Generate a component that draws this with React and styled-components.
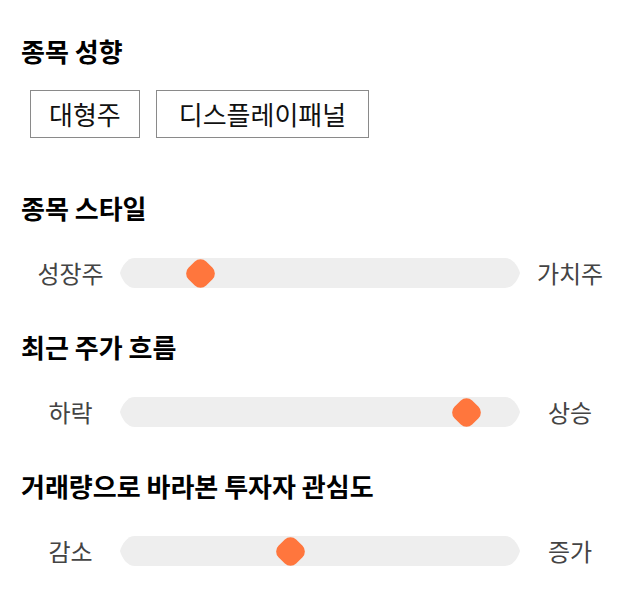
import React from 'react'
import styled, { createGlobalStyle } from 'styled-components'

const GlobalStyle = createGlobalStyle`
    body {
        margin: 0;
        background: #fff;
        font-family: "Noto Sans CJK KR", "Noto Sans", sans-serif;
    }
`;

const Page = styled.div`
    display: flex;
    flex-direction: column;
    gap: 44px;
    width: 600px;
    padding: 36px 20px 0 21px;
`;

const Section = styled.section`
    display: flex;
    flex-direction: column;
    gap: ${props => props.tight ? '24px' : '35px'};
    margin-bottom: ${props => props.tight ? '11px' : '0'};
`;

const Heading = styled.h2`
    margin: 0;
    font-size: 26px;
    line-height: 30px;
    font-weight: 700;
    color: #000;
    white-space: nowrap;
`;

const ChipGroup = styled.div`
    display: flex;
    gap: 16px;
    padding-left: 9px;
`;

const Chip = styled.button`
    box-sizing: border-box;
    height: 48px;
    padding: 0 ${props => props.pad}px;
    border: 1px solid #8a8a8a;
    background: #fff;
    font-family: inherit;
    font-size: 26px;
    line-height: 30px;
    color: #111;
    cursor: pointer;
`;

const SliderRow = styled.div`
    display: grid;
    grid-template-columns: 99px 400px 100px;
    align-items: center;
    height: 30px;
`;

const Label = styled.span`
    text-align: center;
    font-size: 24px;
    line-height: 30px;
    color: #444;
    white-space: nowrap;
`;

const Track = styled.div`
    position: relative;
    height: 30px;
`;

const TrackShape = styled.svg`
    display: block;
`;

const Thumb = styled.div`
    position: absolute;
    top: 2.5px;
    width: 25px;
    height: 25px;
    margin-left: 1.5px;
    border-radius: 8px;
    background: #ff763d;
    transform: rotate(45deg);
`;

const TRACK_W = 400;
const THUMB_BOX = 28;

function Slider({ left, right, value }) {
    const x = (TRACK_W - THUMB_BOX) * value / 100;
    return (
        <SliderRow>
            <Label>{left}</Label>
            <Track>
                <TrackShape width="400" height="30" viewBox="0 0 400 30">
                    <path
                        d="M15 0 H385 C393 0 398 8 400 15 C398 22 393 30 385 30 H15 C7 30 2 22 0 15 C2 8 7 0 15 0 Z"
                        fill="#eeeeee"
                    />
                </TrackShape>
                {/* thumb position comes from the value */}
                <Thumb style={{ left: x }} />
            </Track>
            <Label>{right}</Label>
        </SliderRow>
    )
}

export default function App() {
    return (
        <Page>
            <GlobalStyle />

            <Section tight>
                <Heading>종목 성향</Heading>
                <ChipGroup>
                    <Chip pad={18}>대형주</Chip>
                    <Chip pad={22}>디스플레이패널</Chip>
                </ChipGroup>
            </Section>

            <Section>
                <Heading>종목 스타일</Heading>
                <Slider left="성장주" right="가치주" value={18} />
            </Section>

            <Section>
                <Heading>최근 주가 흐름</Heading>
                <Slider left="하락" right="상승" value={89.5} />
            </Section>

            <Section>
                <Heading>거래량으로 바라본 투자자 관심도</Heading>
                <Slider left="감소" right="증가" value={42} />
            </Section>
        </Page>
    )
}
